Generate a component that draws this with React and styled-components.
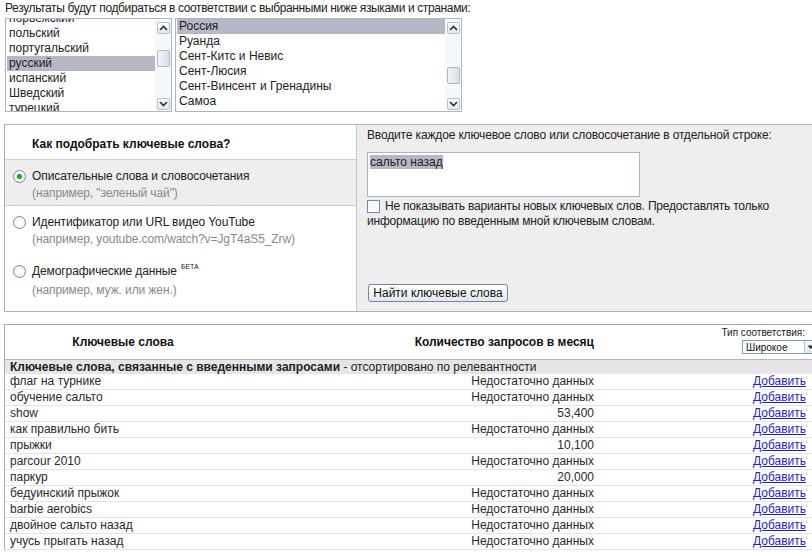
import React from "react";
import styled, { createGlobalStyle } from "styled-components";

const languages = [
  "норвежский",
  "польский",
  "португальский",
  "русский",
  "испанский",
  "Шведский",
  "турецкий",
];

const countries = [
  "Россия",
  "Руанда",
  "Сент-Китс и Невис",
  "Сент-Люсия",
  "Сент-Винсент и Гренадины",
  "Самоа",
];

const NO_DATA = "Недостаточно данных";

const results = [
  ["флаг на турнике", NO_DATA],
  ["обучение сальто", NO_DATA],
  ["show", "53,400"],
  ["как правильно бить", NO_DATA],
  ["прыжки", "10,100"],
  ["parcour 2010", NO_DATA],
  ["паркур", "20,000"],
  ["бедуинский прыжок", NO_DATA],
  ["barbie aerobics", NO_DATA],
  ["двойное сальто назад", NO_DATA],
  ["учусь прыгать назад", NO_DATA],
];

const Chevron = ({ down }) => (
  <svg width="9" height="6" viewBox="0 0 9 6">
    <path
      d={down ? "M1 1 L4.5 4.5 L8 1" : "M1 5 L4.5 1.5 L8 5"}
      fill="none"
      stroke="#2f3444"
      strokeWidth="1.7"
    />
  </svg>
);

const ListSelect = ({ width, items, selected, offset, thumbTop }) => (
  <ListBox $width={width}>
    <Items>
      <ItemsInner $offset={offset}>
        {items.map((item) => (
          <Item key={item} $selected={item === selected}>
            {item}
          </Item>
        ))}
      </ItemsInner>
    </Items>
    <Scrollbar>
      <ScrollButton>
        <Chevron />
      </ScrollButton>
      <Thumb $top={thumbTop} />
      <ScrollButton $bottom>
        <Chevron down />
      </ScrollButton>
    </Scrollbar>
  </ListBox>
);

const App = () => {
  return (
    <Page>
      <GlobalStyle />
      <Intro>Результаты будут подбираться в соответствии с выбранными ниже языками и странами:</Intro>

      <ListRow>
        <ListSelect width={167} items={languages} selected="русский" offset={-8} thumbTop={16} />
        <ListSelect width={287} items={countries} selected="Россия" offset={0} thumbTop={33} />
      </ListRow>

      {/* Keyword search panel */}
      <Panel>
        <MethodColumn>
          <MethodHeader>Как подобрать ключевые слова?</MethodHeader>
          <Option $active $divider>
            <Radio $checked />
            <div>
              <OptionTitle>Описательные слова и словосочетания</OptionTitle>
              <OptionHint>(например, "зеленый чай")</OptionHint>
            </div>
          </Option>
          <Option $bottom={8}>
            <Radio />
            <div>
              <OptionTitle>Идентификатор или URL видео YouTube</OptionTitle>
              <OptionHint>(например, youtube.com/watch?v=JgT4aS5_Zrw)</OptionHint>
            </div>
          </Option>
          <Option>
            <Radio />
            <div>
              <OptionTitle>
                Демографические данные<Beta>БЕТА</Beta>
              </OptionTitle>
              <OptionHint $gap={4}>(например, муж. или жен.)</OptionHint>
            </div>
          </Option>
        </MethodColumn>

        <InputColumn>
          <Label>Вводите каждое ключевое слово или словосочетание в отдельной строке:</Label>
          <TextBox>
            <Selected>сальто назад</Selected>
          </TextBox>
          <CheckLine>
            <Checkbox />
            Не показывать варианты новых ключевых слов. Предоставлять только информацию по
            введенным мной ключевым словам.
          </CheckLine>
          <Button>Найти ключевые слова</Button>
        </InputColumn>
      </Panel>

      {/* Results table */}
      <Table>
        <HeaderRow>
          <HeadCell>Ключевые слова</HeadCell>
          <HeadCell $align="right">Количество запросов в месяц</HeadCell>
          <MatchBox>
            <MatchLabel>Тип соответствия:</MatchLabel>
            <MatchSelect>
              <span>Широкое</span>
              <MatchArrow>
                <svg width="7" height="5" viewBox="0 0 7 5">
                  <path d="M0.5 0.5 L3.5 4 L6.5 0.5 Z" fill="#333" />
                </svg>
              </MatchArrow>
            </MatchSelect>
          </MatchBox>
        </HeaderRow>
        <GroupRow>
          <strong>Ключевые слова, связанные с введенными запросами</strong> - отсортировано по
          релевантности
        </GroupRow>
        {results.map(([keyword, count]) => (
          <Row key={keyword}>
            <Cell>{keyword}</Cell>
            <Cell $align="right">{count}</Cell>
            <Cell $align="right">
              <AddLink href="#">Добавить</AddLink>
            </Cell>
          </Row>
        ))}
      </Table>
    </Page>
  );
};

export default App;

// Styled Components
const GlobalStyle = createGlobalStyle`
  html, body {
    margin: 0;
    overflow: hidden;
    background: #ffffff;
  }
  body {
    font-family: "Liberation Sans", Arial, sans-serif;
    font-size: 12px;
    color: #222;
  }
`;

const Page = styled.div`
  width: 820px;
  padding-left: 4px;
  box-sizing: border-box;
`;

const Intro = styled.div`
  padding: 1px 0 0 1px;
  line-height: 15px;
  letter-spacing: -0.37px;
  color: #222;
  white-space: nowrap;
`;

const ListRow = styled.div`
  display: flex;
  gap: 3px;
  margin: 2px 0 0 1px;
`;

const ListBox = styled.div`
  display: flex;
  width: ${(p) => p.$width}px;
  height: 94px;
  box-sizing: border-box;
  border: 1px solid #a7b7c9;
  background: #fff;
`;

const Items = styled.div`
  flex: 1;
  overflow: hidden;
  padding-left: 1px;
`;

const ItemsInner = styled.div`
  margin-top: ${(p) => p.$offset}px;
`;

const Item = styled.div`
  height: 15px;
  line-height: 15px;
  padding-left: 2px;
  white-space: nowrap;
  color: #222;
  background: ${(p) => (p.$selected ? "#b6b8c6" : "transparent")};
`;

const Scrollbar = styled.div`
  width: 16px;
  display: flex;
  flex-direction: column;
  align-items: center;
  padding: 3px 0 1px;
  box-sizing: border-box;
  background: #f7f8fa;
`;

const ScrollButton = styled.div`
  width: 13px;
  height: 12px;
  box-sizing: border-box;
  margin-top: ${(p) => (p.$bottom ? "auto" : "0")};
  border: 1px solid #b8c0cf;
  border-radius: 2px;
  background: linear-gradient(#fdfdfe, #e3e7ee);
  display: flex;
  align-items: center;
  justify-content: center;
`;

const Thumb = styled.div`
  width: 13px;
  height: 17px;
  box-sizing: border-box;
  margin-top: ${(p) => p.$top}px;
  border: 1px solid #aeb7c8;
  border-radius: 2px;
  background: linear-gradient(90deg, #f4f5f8, #d9dee7);
`;

const Panel = styled.div`
  display: flex;
  margin-top: 12px;
  height: 188px;
  box-sizing: border-box;
  border: 1px solid #b1b1b1;
  border-right: none;
`;

const MethodColumn = styled.div`
  width: 351px;
  background: #fff;
  border-right: 1px solid #c6c6c6;
`;

const MethodHeader = styled.div`
  height: 35px;
  box-sizing: border-box;
  padding: 12px 0 0 27px;
  line-height: 15px;
  font-weight: bold;
  color: #111;
  border-bottom: 1px solid #cfcfcf;
`;

const Option = styled.div`
  display: flex;
  gap: 6px;
  padding: 9px 0 ${(p) => (p.$bottom ? p.$bottom : 4)}px 8px;
  background: ${(p) => (p.$active ? "#eeeeee" : "#fff")};
  border-bottom: ${(p) => (p.$divider ? "1px solid #cfcfcf" : "none")};
`;

const Radio = styled.span`
  flex: none;
  width: 13px;
  height: 13px;
  margin-top: 1px;
  box-sizing: border-box;
  border-radius: 50%;
  border: 1px solid #6a8db4;
  background: ${(p) =>
    p.$checked
      ? "radial-gradient(circle, #25a725 0 2.2px, #e6f2e6 2.8px, #fdfdfd 4px, #dfe4ec 100%)"
      : "radial-gradient(circle, #fdfdfd 0 3px, #e1e6ee 100%)"};
`;

const OptionTitle = styled.div`
  line-height: 15px;
  letter-spacing: -0.1px;
  color: #222;
  white-space: nowrap;
`;

const OptionHint = styled.div`
  margin-top: ${(p) => (p.$gap ? p.$gap : 2)}px;
  line-height: 15px;
  letter-spacing: -0.1px;
  color: #8a8a8a;
  white-space: nowrap;
`;

const Beta = styled.sup`
  font-size: 7px;
  line-height: 0;
  vertical-align: 6px;
  margin-left: 4px;
`;

const InputColumn = styled.div`
  flex: 1;
  display: flex;
  flex-direction: column;
  align-items: flex-start;
  background: #eeeeee;
  padding: 3px 10px 9px 10px;
`;

const Label = styled.div`
  line-height: 15px;
  letter-spacing: -0.15px;
  color: #222;
  white-space: nowrap;
`;

const TextBox = styled.div`
  margin-top: 9px;
  width: 273px;
  height: 45px;
  box-sizing: border-box;
  padding: 3px 2px;
  line-height: 13px;
  border: 1px solid #a7b7c9;
  background: #fff;
`;

const Selected = styled.span`
  background: #b6b8c6;
  color: #222;
`;

const CheckLine = styled.div`
  margin-top: 2px;
  width: 410px;
  line-height: 15px;
  letter-spacing: -0.2px;
  color: #222;
`;

const Checkbox = styled.span`
  display: inline-block;
  width: 13px;
  height: 13px;
  box-sizing: border-box;
  margin-right: 5px;
  vertical-align: -3px;
  border: 1px solid #6a8db4;
  background: linear-gradient(135deg, #f4f5f7, #ffffff);
`;

const Button = styled.button`
  margin-top: auto;
  margin-left: 1px;
  height: 18px;
  width: 140px;
  padding: 0;
  font-family: "Liberation Sans", Arial, sans-serif;
  font-size: 12px;
  line-height: 14px;
  color: #111;
  border: 1px solid #6f87a6;
  border-radius: 3px;
  background: linear-gradient(#ffffff, #e4e6ec);
`;

const Table = styled.div`
  margin-top: 12px;
  border-top: 1px solid #adadad;
  border-left: 1px solid #adadad;
`;

const HeaderRow = styled.div`
  display: grid;
  grid-template-columns: 236px 353px 1fr;
  height: 35px;
  box-sizing: border-box;
  border-bottom: 1px solid #b5b5b5;
`;

const HeadCell = styled.div`
  padding-top: 10px;
  line-height: 15px;
  font-weight: bold;
  color: #111;
  white-space: nowrap;
  text-align: ${(p) => (p.$align === "right" ? "right" : "center")};
`;

const MatchBox = styled.div`
  display: flex;
  flex-direction: column;
  align-items: flex-end;
  padding: 2px 15px 0 0;
`;

const MatchLabel = styled.div`
  font-size: 10px;
  line-height: 12px;
  color: #222;
  white-space: nowrap;
`;

const MatchSelect = styled.div`
  display: flex;
  align-items: center;
  justify-content: space-between;
  margin: 1px -12px 0 0;
  width: 75px;
  height: 14px;
  box-sizing: border-box;
  padding-left: 3px;
  border: 1px solid #7f9db9;
  background: #fff;
  font-size: 10px;
  color: #111;
`;

const MatchArrow = styled.span`
  width: 11px;
  height: 12px;
  display: flex;
  align-items: center;
  justify-content: center;
  border-left: 1px solid #b8c0cf;
  background: linear-gradient(#fafbfd, #dfe4ec);
`;

const GroupRow = styled.div`
  height: 14px;
  line-height: 14px;
  padding-left: 5px;
  background: #e6e6e6;
  color: #222;
  white-space: nowrap;
`;

const Row = styled.div`
  display: grid;
  grid-template-columns: 236px 353px 1fr;
  height: 16px;
  box-sizing: border-box;
  border-bottom: 1px solid #e4e4e4;
`;

const Cell = styled.div`
  line-height: 15px;
  color: #2a2a2a;
  white-space: nowrap;
  text-align: ${(p) => (p.$align === "right" ? "right" : "left")};
  padding: ${(p) => (p.$align === "right" ? "0 14px 0 0" : "0 0 0 5px")};

  &:nth-child(2) {
    padding-right: 0;
  }
`;

const AddLink = styled.a`
  color: #1f1fd6;
  text-decoration: underline;
`;
